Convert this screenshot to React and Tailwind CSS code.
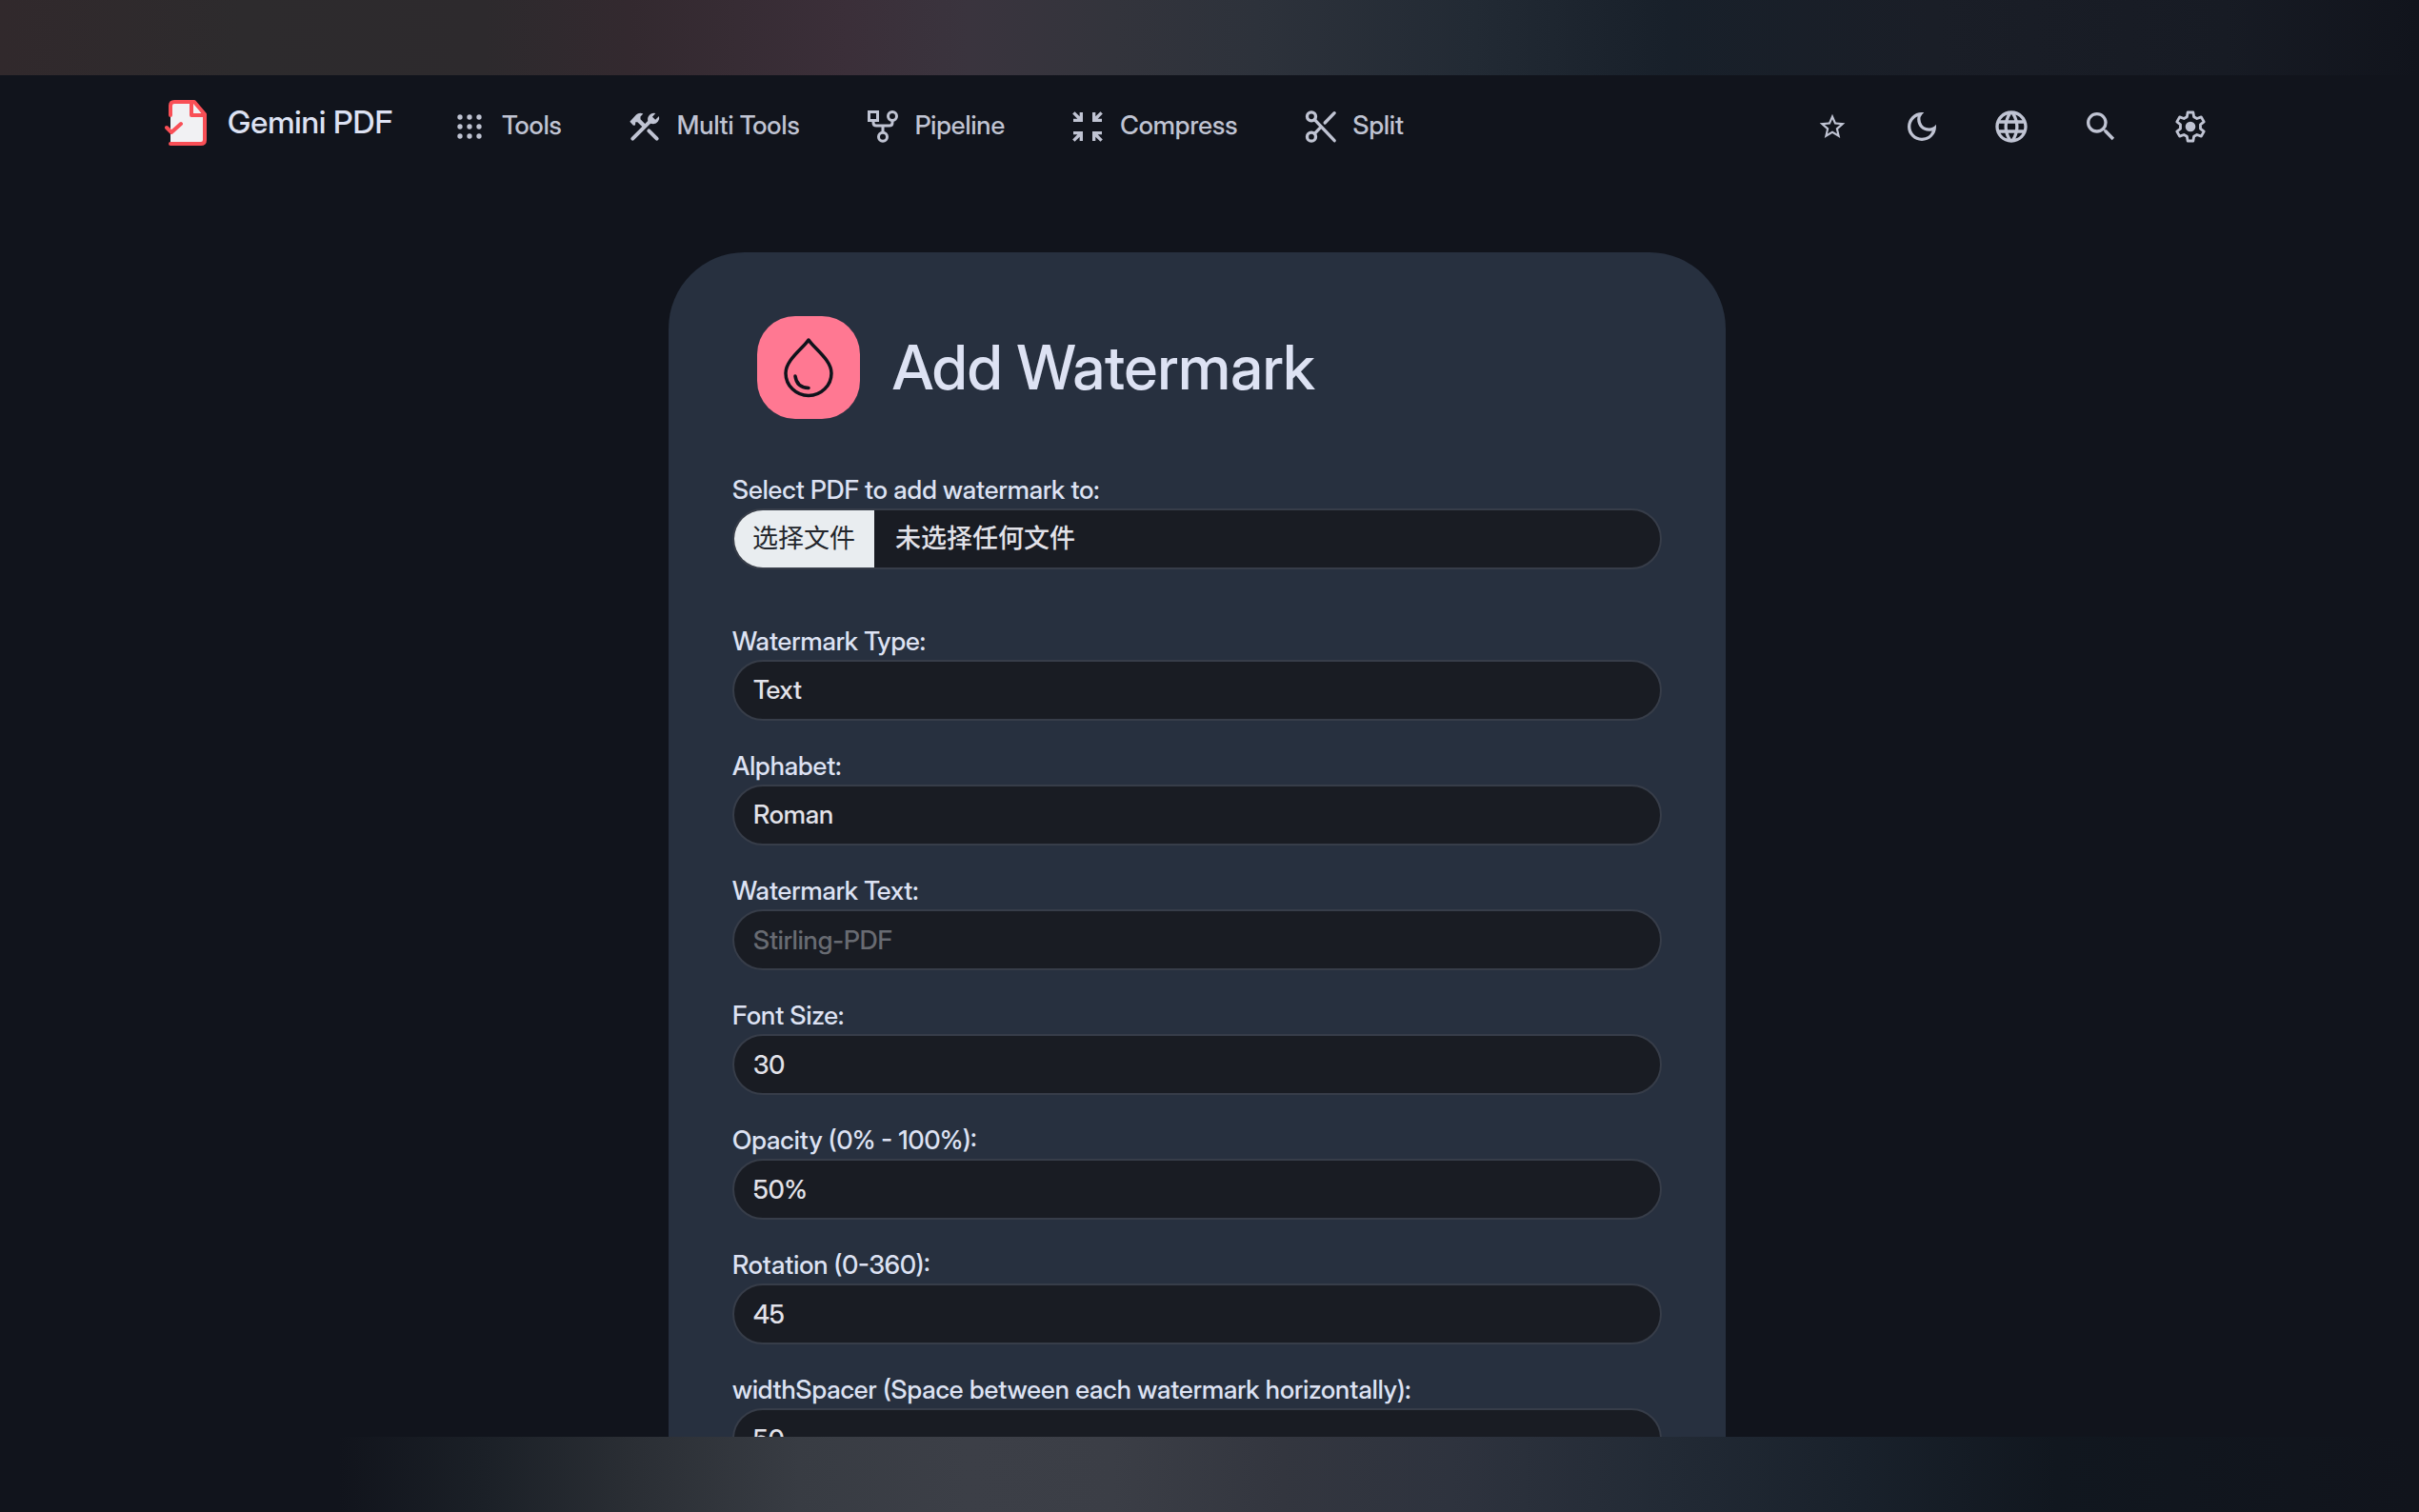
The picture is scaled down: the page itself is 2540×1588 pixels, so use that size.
import { MdZoomInMap, MdLanguage, MdSearch, MdOutlineDarkMode, MdOutlineStarBorder } from "react-icons/md";

const FONT = "font-['Inter_Display',Inter,'Noto_Sans_CJK_SC',sans-serif]";

function LogoIcon() {
  return (
    <svg viewBox="0 0 44 48" className="h-12 w-11" fill="none" aria-hidden="true">
      <path d="M6 4h25l9 11v29H6z" fill="#f1f1f3" />
      <path d="M6 16V6q0-4 4-4h21l11 13v27q0 4-4 4H6" stroke="#f94f56" strokeWidth="4" strokeLinejoin="round" strokeLinecap="round" />
      <path d="M28 3v13h13" stroke="#f94f56" strokeWidth="4" strokeLinejoin="round" />
      <path d="M2 29l5 5 10-9" stroke="#f94f56" strokeWidth="4" strokeLinejoin="round" strokeLinecap="round" />
    </svg>
  );
}

function AppsIcon() {
  return (
    <svg viewBox="0 0 24 24" className="size-10" fill="currentColor" aria-hidden="true">
      {[6, 12, 18].map((y) => [6, 12, 18].map((x) => <circle key={`${x}-${y}`} cx={x} cy={y} r="1.6" />))}
    </svg>
  );
}

function ToolsIcon() {
  return (
    <svg viewBox="0 0 24 24" className="size-10" fill="none" aria-hidden="true">
      <path d="M4.4 19.6L16 8M14.6 14.6l5 5" stroke="currentColor" strokeWidth="2.4" strokeLinecap="round" />
      <path d="M18.8 3.6a3.900 3.900 0 0 0-4.800 4.800l1.700 1.700 1.700.2a3.900 3.900 0 0 0 3.600-4.900l-2.300 2.300-1.900-1.900z" fill="currentColor" />
      <path d="M2.600 8.800L6.600 4.500q1.800-1.600 4.400-.6L9.300 5.700v1.700l4 4-1.700 1.800-4.200-4H6.200l-.2 1.900-1.200.2z" fill="currentColor" />
    </svg>
  );
}

function PipelineIcon() {
  return (
    <svg viewBox="0 0 24 24" className="size-10" fill="none" stroke="currentColor" strokeWidth="1.8" aria-hidden="true">
      <rect x="3.300" y="2.700" width="5.400" height="5.400" />
      <circle cx="18" cy="5.400" r="2.700" />
      <circle cx="12" cy="18.500" r="2.700" />
      <path d="M6 8.200v1.200q0 2 2 2h8q2 0 2-2V8.200M12 11.400v4.400" />
    </svg>
  );
}

function CutIcon() {
  return (
    <svg viewBox="0 0 24 24" className="size-10" fill="none" stroke="currentColor" strokeWidth="2" strokeLinecap="round" aria-hidden="true">
      <circle cx="6" cy="5.600" r="2.700" />
      <circle cx="6" cy="18.400" r="2.700" />
      <path d="M8 7.600L20.500 20.800M8 16.400l4-4.200M14.500 9.600l6-6.200" />
    </svg>
  );
}

function GearIcon() {
  return (
    <svg viewBox="0 0 24 24" className="size-10" fill="none" aria-hidden="true">
      <path
        d="M10.300 3h3.400l.5 2.800 1.900 1.100 2.700-1 1.700 3-2.200 1.800v2.600l2.200 1.800-1.700 3-2.700-1-1.900 1.100-.5 2.800h-3.400l-.5-2.800-1.900-1.100-2.700 1-1.700-3 2.200-1.800v-2.600L3.500 8.900l1.700-3 2.700 1 1.900-1.100z"
        stroke="currentColor"
        strokeWidth="1.700"
        strokeLinejoin="round"
      />
      <circle cx="12" cy="12" r="3.200" fill="currentColor" />
    </svg>
  );
}

function DropIcon() {
  return (
    <svg viewBox="0 0 52 64" className="h-16 w-[52px]" fill="none" stroke="#0f131b" strokeWidth="3.500" strokeLinecap="round" strokeLinejoin="round" aria-hidden="true">
      <path d="M26 3C20 12 2 24 2 38a24 23.500 0 0 0 48 0C50 24 32 12 26 3z" />
      <path d="M12 41q1.500 12 14 12.500" />
    </svg>
  );
}

const links = [
  { label: "Tools", icon: <AppsIcon /> },
  { label: "Multi Tools", icon: <ToolsIcon /> },
  { label: "Pipeline", icon: <PipelineIcon /> },
  { label: "Compress", icon: <MdZoomInMap className="size-10" /> },
  { label: "Split", icon: <CutIcon /> },
];

const actions = [
  { label: "Favourites", icon: <MdOutlineStarBorder className="size-8" /> },
  { label: "Dark mode", icon: <MdOutlineDarkMode className="size-10" /> },
  { label: "Language", icon: <MdLanguage className="size-10" /> },
  { label: "Search", icon: <MdSearch className="size-10" /> },
  { label: "Settings", icon: <GearIcon /> },
];

const control =
  "block h-16 w-full appearance-none rounded-full border-2 border-[#373d49] bg-[#191c23] px-5 text-[27px] font-medium text-[#e2e2e9] outline-none placeholder:text-[#686b72]";

function Field({ id, label, children }) {
  return (
    <div>
      <label htmlFor={id} className="block text-[27px] leading-[39px] font-medium">
        {label}
      </label>
      {children}
    </div>
  );
}

export default function App() {
  return (
    <div className={`flex h-screen flex-col overflow-hidden bg-[#11141c] text-[#dde2f3] ${FONT}`}>
      <div className="h-[79px] shrink-0 bg-[linear-gradient(90deg,#31292c_0%,#2d2b2d_10%,#2d2a2d_20%,#33292f_26%,#3b2f39_35%,#3a343e_40%,#33343c_46%,#2d323b_52%,#222a34_61%,#18202a_69%,#1a1e27_80%,#171b24_92%,#11141c_100%)]" />
      <div className="min-h-0 flex-1 overflow-hidden pr-[26px]">
        <header className="flex h-[107px] items-center pr-[194px] pl-[173px]">
          <a href="#" className="flex items-center gap-[22px] pb-2 text-[33px] font-medium">
            <LogoIcon />
            Gemini PDF
          </a>
          <nav className="ml-[61px] flex gap-[67px] text-[#c0c4d3]">
            {links.map((l) => (
              <a key={l.label} href="#" className="flex items-center gap-[14px] text-[27px] font-medium">
                {l.icon}
                {l.label}
              </a>
            ))}
          </nav>
          <div className="ml-auto flex gap-[54px] text-[#c0c4d3]">
            {actions.map((a) => (
              <button key={a.label} type="button" aria-label={a.label} className="flex size-10 items-center justify-center">
                {a.icon}
              </button>
            ))}
          </div>
        </header>
        <main className="mx-auto mt-[79px] w-full max-w-[1110px] rounded-[80px] bg-[#27303f] px-[67px] pt-[67px] pb-20">
          <div className="flex items-center gap-[34px] pl-[26px]">
            <span className="flex size-[108px] items-center justify-center rounded-[40px] bg-[#ff7892]">
              <DropIcon />
            </span>
            <h1 className="text-[64px] leading-[84px] font-medium">Add Watermark</h1>
          </div>
          <form className="mt-[55px] flex flex-col gap-7">
            <div className="pb-7">
              <Field id="file" label="Select PDF to add watermark to:">
                <div className="flex h-16 items-center overflow-hidden rounded-full border-2 border-[#373d49] bg-[#191c23] text-[27px] text-[#e2e2e9]">
                  <button id="file" type="button" className="h-full bg-[#e9edf0] pr-5 pl-[19px] text-[#22252b]">
                    选择文件
                  </button>
                  <span className="pl-[22px] font-medium">未选择任何文件</span>
                </div>
              </Field>
            </div>
            <Field id="type" label="Watermark Type:">
              <select id="type" className={control}>
                <option>Text</option>
                <option>Image</option>
              </select>
            </Field>
            <Field id="alphabet" label="Alphabet:">
              <select id="alphabet" className={control}>
                <option>Roman</option>
              </select>
            </Field>
            <Field id="text" label="Watermark Text:">
              <input id="text" placeholder="Stirling-PDF" className={control} />
            </Field>
            <Field id="size" label="Font Size:">
              <input id="size" defaultValue="30" className={control} />
            </Field>
            <Field id="opacity" label="Opacity (0% - 100%):">
              <input id="opacity" defaultValue="50%" className={control} />
            </Field>
            <Field id="rotation" label="Rotation (0-360):">
              <input id="rotation" defaultValue="45" className={control} />
            </Field>
            <Field id="width" label="widthSpacer (Space between each watermark horizontally):">
              <input id="width" defaultValue="50" className={control} />
            </Field>
          </form>
        </main>
      </div>
      <div className="h-[79px] shrink-0 bg-[linear-gradient(90deg,#11141c_0%,#11141c_14%,#1b2027_20%,#2a2e34_26%,#383c43_33%,#3c3f47_40%,#3b3e46_46%,#33363f_53%,#2e333e_60%,#222a35_69%,#19212b_77%,#11171f_85%,#11141c_100%)]" />
    </div>
  );
}
